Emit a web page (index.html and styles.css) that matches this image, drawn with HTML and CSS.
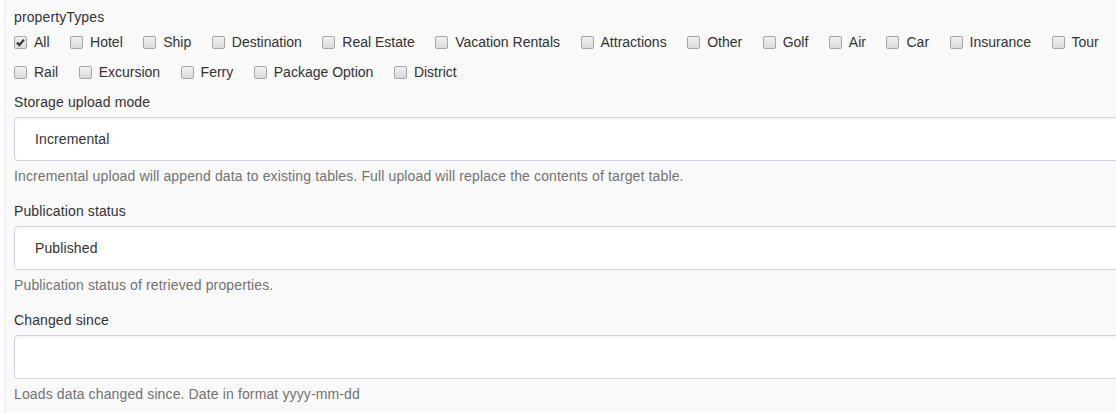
FILE: index.html
```html
<!DOCTYPE html>
<html>
<head>
<meta charset="utf-8">
<link rel="stylesheet" href="styles.css">
</head>
<body>
<div class="page">
  <form class="form">
    <div class="group group-checks">
      <div class="label">propertyTypes</div>
      <div class="checks">
        <label class="check"><span class="box checked"><svg viewBox="0 0 13 13" width="13" height="13"><path d="M3 6.5 L5.3 9 L10 3.6" fill="none" stroke="#333" stroke-width="2.2"/></svg></span>All</label>
        <label class="check"><span class="box"></span>Hotel</label>
        <label class="check"><span class="box"></span>Ship</label>
        <label class="check"><span class="box"></span>Destination</label>
        <label class="check"><span class="box"></span>Real Estate</label>
        <label class="check"><span class="box"></span>Vacation Rentals</label>
        <label class="check"><span class="box"></span>Attractions</label>
        <label class="check"><span class="box"></span>Other</label>
        <label class="check"><span class="box"></span>Golf</label>
        <label class="check"><span class="box"></span>Air</label>
        <label class="check"><span class="box"></span>Car</label>
        <label class="check"><span class="box"></span>Insurance</label>
        <label class="check"><span class="box"></span>Tour</label>
        <label class="check"><span class="box"></span>Rail</label>
        <label class="check"><span class="box"></span>Excursion</label>
        <label class="check"><span class="box"></span>Ferry</label>
        <label class="check"><span class="box"></span>Package Option</label>
        <label class="check"><span class="box"></span>District</label>
      </div>
    </div>
    <div class="group">
      <div class="label">Storage upload mode</div>
      <div class="control">Incremental</div>
      <div class="help">Incremental upload will append data to existing tables. Full upload will replace the contents of target table.</div>
    </div>
    <div class="group">
      <div class="label">Publication status</div>
      <div class="control">Published</div>
      <div class="help">Publication status of retrieved properties.</div>
    </div>
    <div class="group">
      <div class="label">Changed since</div>
      <div class="control"></div>
      <div class="help">Loads data changed since. Date in format yyyy-mm-dd</div>
    </div>
  </form>
</div>
</body>
</html>
```

FILE: styles.css
```css
html, body {
  margin: 0;
  padding: 0;
  background: #fdfdfd;
  overflow: hidden;
}
body {
  width: 1116px;
  height: 413px;
  font-family: "Liberation Sans", Arial, sans-serif;
  font-size: 14px;
  line-height: 20px;
  color: #333;
}
.page {
  margin-left: 4px;
  border-left: 1px solid #ececec;
  background: #f9f9f9;
  height: 413px;
  padding: 7px 0 0 9px;
  box-sizing: border-box;
}
.form {
  width: 1140px;
  display: flex;
  flex-direction: column;
}
.group {
  display: flex;
  flex-direction: column;
  margin-bottom: 15px;
}
.group-checks {
  margin-bottom: 10px;
}
.label {
  margin-bottom: 5px;
  letter-spacing: 0.12px;
}
.checks {
  display: flex;
  flex-wrap: wrap;
  width: 1102px;
  row-gap: 10px;
  column-gap: 20.5px;
}
.check {
  display: flex;
  align-items: center;
  height: 20px;
}
.box {
  width: 11px;
  height: 11px;
  border: 1px solid #a6a6a6;
  border-radius: 2px;
  background: linear-gradient(#f1f1f1, #dadada);
  margin-right: 7px;
  position: relative;
  box-sizing: content-box;
}
.box svg {
  position: absolute;
  left: -1px;
  top: -1px;
}
.control {
  height: 44px;
  box-sizing: border-box;
  border: 1px solid #d2d2dc;
  border-radius: 4px;
  background: #fff;
  box-shadow: inset 0 2px 2px rgba(0,0,0,0.04);
  padding: 0 20px;
  display: flex;
  align-items: center;
  letter-spacing: 0.12px;
}
.help {
  margin-top: 5px;
  color: #737373;
  letter-spacing: 0.13px;
}
```
